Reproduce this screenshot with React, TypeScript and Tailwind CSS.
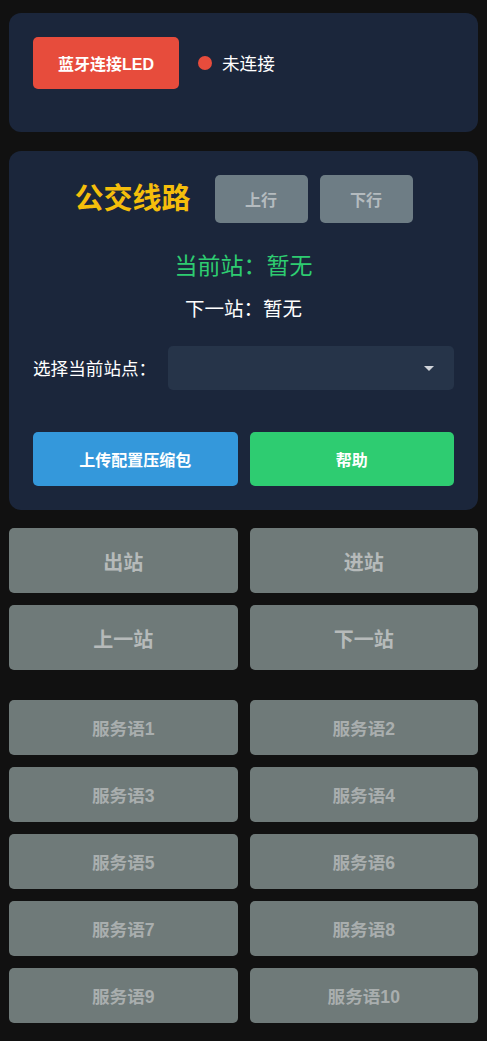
import React from "react";

const font = { fontFamily: '"Liberation Sans", "Noto Sans CJK SC", "Noto Sans", sans-serif' };

export default function App() {
  const services = Array.from({ length: 10 }, (_, i) => `服务语${i + 1}`);
  return (
    <div className="min-h-[1041px] bg-[#111111] px-[9px] pt-[13px] pb-[18px]" style={font}>
      <div className="rounded-[12px] bg-[#1b263b] px-[24px] pt-[24px] pb-[43px]">
        <div className="flex items-center">
          <button className="h-[52px] w-[146px] rounded-[5px] bg-[#e74c3c] pt-[4px] text-[16px] font-bold text-white">
            蓝牙连接LED
          </button>
          <span className="ml-[19px] h-[14px] w-[14px] rounded-full bg-[#e74c3c]" />
          <span className="ml-[10px] pt-[3px] text-[17.6px] text-white">未连接</span>
        </div>
      </div>

      <div className="mt-[19px] rounded-[12px] bg-[#1b263b] px-[24px] pt-[24px] pb-[24px]">
        <div className="flex items-center justify-center">
          <span className="text-[29px] font-bold leading-none text-[#f5be0b]">公交线路</span>
          <button className="ml-[24px] h-[48px] w-[93px] rounded-[5px] bg-[#6e7d85] pt-[4px] text-[16px] font-semibold text-[#b4bbbf]">
            上行
          </button>
          <button className="ml-[12px] h-[48px] w-[93px] rounded-[5px] bg-[#6e7d85] pt-[4px] text-[16px] font-semibold text-[#b4bbbf]">
            下行
          </button>
        </div>
        <div className="mt-[25px] text-center text-[23px] leading-[36px] text-[#2ecc71]">当前站：暂无</div>
        <div className="mt-[11px] text-center text-[19.5px] leading-[28px] text-white">下一站：暂无</div>
        <div className="mt-[23px] flex items-center">
          <span className="w-[135px] pt-[2px] text-[17.6px] text-white">选择当前站点：</span>
          <div className="relative h-[44px] flex-1 rounded-[5px] bg-[#263449]">
            <span className="absolute right-[20px] top-[20px] h-0 w-0 border-x-[5px] border-t-[5px] border-x-transparent border-t-[#d0d4da]" />
          </div>
        </div>
        <div className="mt-[42px] grid grid-cols-2 gap-[12px]">
          <button className="h-[54px] rounded-[5px] bg-[#3498db] pt-[4px] text-[16px] font-bold text-white">上传配置压缩包</button>
          <button className="h-[54px] rounded-[5px] bg-[#2ecc71] pt-[4px] text-[16px] font-bold text-white">帮助</button>
        </div>
      </div>

      <div className="mt-[18px] grid grid-cols-2 gap-[12px]">
        {["出站", "进站", "上一站", "下一站"].map((t) => (
          <button key={t} className="h-[65px] rounded-[5px] bg-[#6f7a79] pt-[4px] text-[20px] font-bold text-[#b6baba]">
            {t}
          </button>
        ))}
      </div>

      <div className="mt-[30px] grid grid-cols-2 gap-[12px]">
        {services.map((t) => (
          <button key={t} className="h-[55px] rounded-[5px] bg-[#6f7a79] pt-[4px] text-[17.6px] font-bold text-[#a9aeae]">
            {t}
          </button>
        ))}
      </div>
    </div>
  );
}
